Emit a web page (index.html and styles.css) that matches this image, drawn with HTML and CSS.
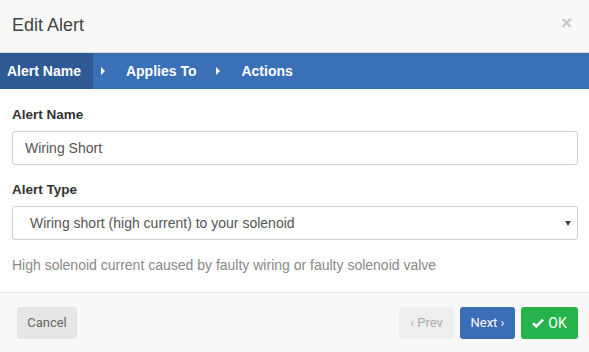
FILE: index.html
```html
<!DOCTYPE html>
<html lang="en">
<head>
<meta charset="UTF-8" />
<meta name="viewport" content="width=device-width, initial-scale=1" />
<title>Edit Alert</title>
<link rel="stylesheet" href="styles.css">
</head>
<body>
  <div class="modal">
    <!-- Header -->
    <div class="modal-header">
      <h4 class="modal-title">Edit Alert</h4>
      <span class="close">&times;</span>
    </div>

    <!-- Wizard steps -->
    <ul class="steps">
      <li class="step active">Alert Name</li>
      <li class="step"><span class="caret"></span>Applies To</li>
      <li class="step"><span class="caret"></span>Actions</li>
    </ul>

    <!-- Form -->
    <div class="modal-body">
      <div class="form-group">
        <label>Alert Name</label>
        <div class="form-control">Wiring Short</div>
      </div>
      <div class="form-group">
        <label>Alert Type</label>
        <div class="form-control select">
          <span>Wiring short (high current) to your solenoid</span>
          <span class="select-arrow"></span>
        </div>
      </div>
      <p class="help">High solenoid current caused by faulty wiring or faulty solenoid valve</p>
    </div>

    <!-- Footer -->
    <div class="modal-footer">
      <button class="btn btn-default">Cancel</button>
      <div class="right">
        <button class="btn btn-disabled">&lsaquo; Prev</button>
        <button class="btn btn-primary">Next &rsaquo;</button>
        <button class="btn btn-success">
          <svg width="12" height="10" viewBox="0 0 12 10"><path d="M1 5.2 L4.3 8.3 L11 1.6" fill="none" stroke="#fff" stroke-width="2.6"/></svg>
          OK
        </button>
      </div>
    </div>
  </div>
</body>
</html>
```

FILE: styles.css
```css
* {
  margin: 0;
  padding: 0;
  box-sizing: border-box;
}

html, body {
  height: 100%;
  background: #fff;
  font-family: 'Liberation Sans', Arial, sans-serif;
  font-size: 14px;
  color: #333;
  overflow: hidden;
}

.modal {
  width: 589px;
  height: 352px;
  display: flex;
  flex-direction: column;
}

.modal-header {
  height: 53px;
  background: #f8f8f8;
  border-bottom: 1px solid #dcdcdc;
  display: flex;
  align-items: center;
  justify-content: space-between;
  padding: 0 17px 0 12px;
}

.modal-title {
  font-size: 18px;
  font-weight: normal;
  color: #444;
  margin-top: -2px;
}

.close {
  font-size: 19px;
  font-weight: bold;
  color: #c8c8c8;
  margin-top: -6px;
}

/* Wizard steps */
.steps {
  list-style: none;
  display: flex;
  height: 36px;
  background: #3a70b8;
}

.step {
  display: flex;
  align-items: center;
  color: #fff;
  font-weight: bold;
  font-size: 14px;
  white-space: nowrap;
  padding: 0 12px 0 8px;
}

.step.active {
  background: #2d5a95;
  padding: 0 12px 0 7px;
}

.caret {
  width: 0;
  height: 0;
  border-top: 4px solid transparent;
  border-bottom: 4px solid transparent;
  border-left: 4px solid #fff;
  margin-right: 21px;
}

/* Form */
.modal-body {
  flex: 1;
  padding: 18px 11px 0 12px;
}

.form-group {
  margin-bottom: 17px;
}

label {
  display: block;
  font-weight: bold;
  font-size: 13.5px;
  color: #333;
  margin-bottom: 9px;
}

.form-control {
  height: 34px;
  border: 1px solid #ccc;
  border-radius: 3px;
  padding: 0 12px;
  display: flex;
  align-items: center;
  color: #555;
}

.form-control.select {
  justify-content: space-between;
  padding: 0 6px 0 17px;
}

.select-arrow {
  width: 0;
  height: 0;
  border-left: 3px solid transparent;
  border-right: 3px solid transparent;
  border-top: 5px solid #444;
}

.help {
  color: #888;
}

/* Footer */
.modal-footer {
  height: 60px;
  background: #f8f8f8;
  border-top: 1px solid #e2e2e2;
  display: flex;
  align-items: center;
  justify-content: space-between;
  padding: 0 11px 0 17px;
}

.right {
  display: flex;
  gap: 6px;
}

.btn {
  height: 32px;
  border: none;
  border-radius: 3px;
  font-family: Roboto, sans-serif;
  font-size: 13px;
  padding: 0;
  white-space: nowrap;
  display: flex;
  align-items: center;
  justify-content: center;
  gap: 4px;
}

.btn-default {
  background: #e6e6e6;
  color: #666;
  width: 60px;
}

.btn-disabled {
  background: #eeeeee;
  color: #aaa;
  width: 55px;
}

.btn-primary {
  background: #3a6db5;
  color: #fff;
  width: 55px;
}

.btn-success {
  background: #27b34c;
  color: #fff;
  width: 57px;
  font-size: 14px;
}
```
